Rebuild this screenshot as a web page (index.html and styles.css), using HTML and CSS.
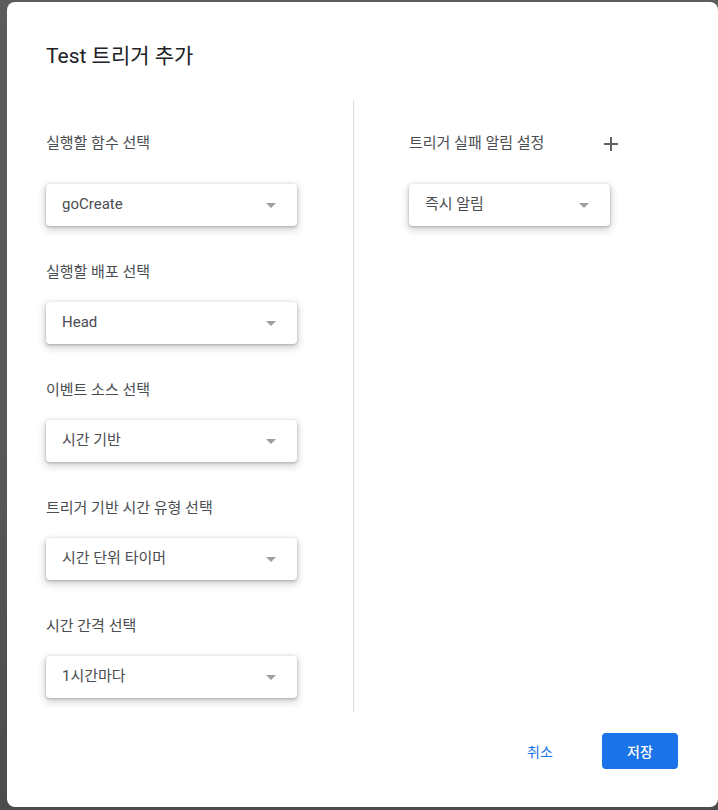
FILE: index.html
```html
<!DOCTYPE html>
<html lang="ko">
<head>
<meta charset="utf-8">
<title>Test 트리거 추가</title>
<link rel="stylesheet" href="styles.css">
</head>
<body>
<div class="backdrop">
  <div class="dialog">
    <h1 class="title">Test 트리거 추가</h1>
    <div class="content">
      <div class="col col-left">
        <div class="field field-first">
          <div class="label">실행할 함수 선택</div>
          <div class="select select-wide"><span>goCreate</span><i class="arrow"></i></div>
        </div>
        <div class="field">
          <div class="label">실행할 배포 선택</div>
          <div class="select select-wide"><span>Head</span><i class="arrow"></i></div>
        </div>
        <div class="field">
          <div class="label">이벤트 소스 선택</div>
          <div class="select select-wide"><span>시간 기반</span><i class="arrow"></i></div>
        </div>
        <div class="field">
          <div class="label">트리거 기반 시간 유형 선택</div>
          <div class="select select-wide"><span>시간 단위 타이머</span><i class="arrow"></i></div>
        </div>
        <div class="field">
          <div class="label">시간 간격 선택</div>
          <div class="select select-wide"><span>1시간마다</span><i class="arrow"></i></div>
        </div>
      </div>
      <div class="col col-right">
        <div class="field field-first">
          <div class="label-row">
            <div class="label">트리거 실패 알림 설정</div>
            <svg class="plus" width="14" height="14" viewBox="0 0 14 14"><path d="M7 0v14M0 7h14" stroke="#5f6368" stroke-width="2" fill="none"/></svg>
          </div>
          <div class="select select-narrow"><span>즉시 알림</span><i class="arrow"></i></div>
        </div>
      </div>
    </div>
    <div class="footer">
      <button class="btn btn-text">취소</button>
      <button class="btn btn-primary">저장</button>
    </div>
  </div>
</div>
</body>
</html>
```
FILE: styles.css
```css
* { box-sizing: border-box; }
html, body { margin: 0; padding: 0; }
body {
  background: #585a59;
  font-family: Roboto, "Noto Sans CJK KR", sans-serif;
  width: 718px;
  height: 810px;
  overflow: hidden;
}
.backdrop {
  padding: 2px 0 0 7px;
  height: 810px;
  background: linear-gradient(to bottom, #5a5d5b 0, #575757 60%, #4c4c4c 100%);
}
.dialog {
  width: 711px;
  height: 805px;
  background: #fff;
  border-radius: 8px;
  padding: 40px 40px 0 39px;
  display: flex;
  flex-direction: column;
}
.title {
  margin: 0;
  font-size: 21px;
  font-weight: 400;
  line-height: 28px;
  color: #202124;
}
.content {
  margin-top: 30px;
  height: 612px;
  display: flex;
}
.col-left {
  width: 308px;
  border-right: 1px solid #dadce0;
  padding-top: 33px;
}
.col-right {
  padding-top: 33px;
  padding-left: 55px;
}
.field { margin-bottom: 36px; }
.label {
  font-size: 15px;
  line-height: 20px;
  color: #4a4d51;
  margin-bottom: 20px;
}
.field-first .label { margin-bottom: 31px; }
.label-row {
  display: flex;
  align-items: flex-start;
  width: 209px;
  justify-content: space-between;
}
.plus { margin-top: 4px; }
.select {
  height: 42px;
  border-radius: 4px;
  background: #fff;
  box-shadow: 0 1px 3px 0 rgba(60,64,67,.35), 0 3px 7px 2px rgba(60,64,67,.18);
  display: flex;
  align-items: center;
  justify-content: space-between;
  padding: 0 21px 0 16px;
  font-size: 15px;
  color: #4a4d51;
}
.select span { line-height: 20px; margin-top: -2px; }
.select-wide { width: 251px; }
.select-narrow { width: 201px; }
.arrow {
  width: 0;
  height: 0;
  border-left: 5px solid transparent;
  border-right: 5px solid transparent;
  border-top: 5px solid #9e9e9e;
}
.footer {
  margin-top: 21px;
  display: flex;
  justify-content: flex-end;
  align-items: center;
  gap: 30px;
}
.btn {
  font-family: Roboto, "Noto Sans CJK KR", sans-serif;
  font-size: 14px;
  font-weight: 500;
  border: 0;
  border-radius: 4px;
  height: 36px;
  cursor: pointer;
}
.btn-text {
  background: transparent;
  color: #1a73e8;
  width: 64px;
  padding: 0;
  font-weight: 400;
}
.btn-primary {
  background: #1a73e8;
  color: #fff;
  width: 76px;
}
```
